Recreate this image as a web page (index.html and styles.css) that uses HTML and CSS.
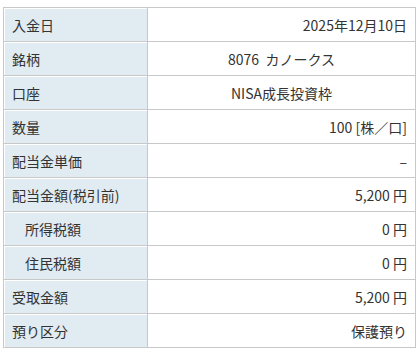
FILE: index.html
```html
<!DOCTYPE html>
<html lang="ja">
<head>
<meta charset="utf-8">
<link rel="stylesheet" href="styles.css">
</head>
<body>
<div class="wrap">
  <div class="grid">
    <div class="th">入金日</div><div class="td right">2025年12月10日</div>
    <div class="th">銘柄</div><div class="td center">8076&nbsp;&nbsp;カノークス</div>
    <div class="th">口座</div><div class="td center">NISA成長投資枠</div>
    <div class="th">数量</div><div class="td right">100 [株／口]</div>
    <div class="th">配当金単価</div><div class="td right">–</div>
    <div class="th">配当金額(税引前)</div><div class="td right">5,200 円</div>
    <div class="th indent">所得税額</div><div class="td right">0 円</div>
    <div class="th indent">住民税額</div><div class="td right">0 円</div>
    <div class="th">受取金額</div><div class="td right">5,200 円</div>
    <div class="th">預り区分</div><div class="td right">保護預り</div>
  </div>
</div>
</body>
</html>
```
FILE: styles.css
```css
html, body {
  margin: 0;
  padding: 0;
  background: #fff;
}
body {
  font-family: "Noto Sans CJK JP", "Noto Sans", sans-serif;
  font-size: 14px;
  color: #333;
}
.wrap {
  padding: 7px 0 0 3px;
}
.grid {
  display: grid;
  grid-template-columns: 144px 268px;
  grid-auto-rows: 34px;
  width: 413px;
  border-top: 1px solid #c8c8c8;
  border-left: 1px solid #c8c8c8;
  box-sizing: border-box;
}
.th, .td {
  border-right: 1px solid #c8c8c8;
  border-bottom: 1px solid #c8c8c8;
  display: flex;
  align-items: center;
  white-space: nowrap;
  line-height: 1;
}
.th {
  background: #e1ebf2;
  padding-left: 8px;
  box-shadow: inset 1px 1px 0 #fff;
}
.th.indent {
  padding-left: 21px;
}
.td {
  padding: 0 8px;
}
.td.right {
  justify-content: flex-end;
}
.td.center {
  justify-content: center;
}
```
